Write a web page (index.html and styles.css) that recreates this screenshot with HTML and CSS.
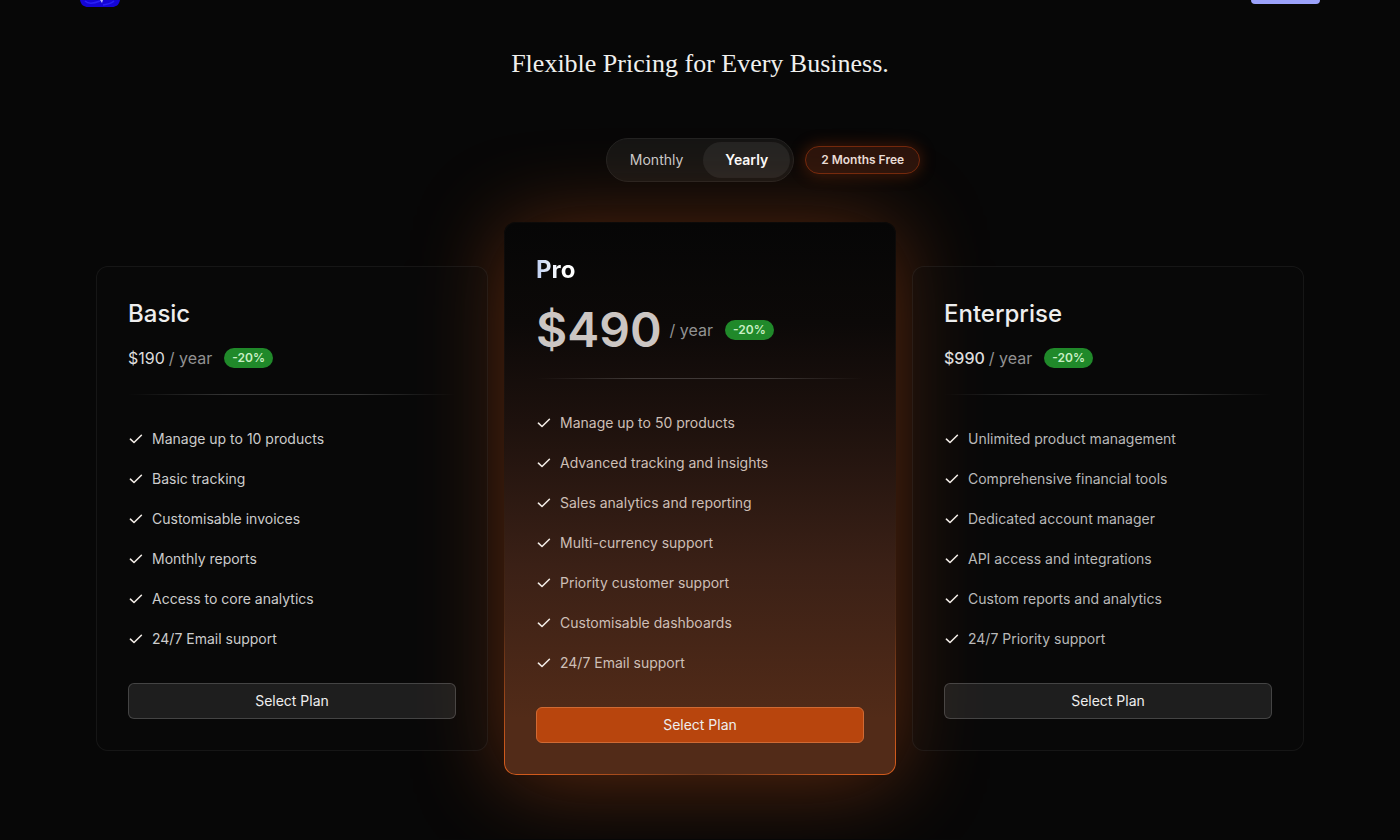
FILE: index.html
```html
<!DOCTYPE html>
<html lang="en">

<head>
  <meta charset="utf-8">
  <meta name="viewport" content="width=device-width, initial-scale=1.0">
  <title>Pricing</title>
  <link rel="stylesheet" href="styles.css">
</head>

<body>
  <svg class="defs" width="0" height="0">
    <symbol id="check" viewBox="0 0 16 16">
      <path d="M2.4 8.2 6 11.5l7.4-7.2" fill="none" stroke="currentColor" stroke-width="1.6" stroke-linecap="round" stroke-linejoin="round" />
    </symbol>
  </svg>

  <header class="header">
    <a class="logo" href="#" aria-label="Home">
      <svg width="40" height="8" viewBox="0 0 40 8">
        <path d="M0 0h40c-1 5-4 7-8 7H8C4 7 1 5 0 0z" fill="#1405d6" />
        <path d="M5 1c4 4 10 2 15 0M23 5c5-1 8-1 11-4" fill="none" stroke="#2a20f5" stroke-width="1.5" />
        <path d="M20 0l3 0-1 3z" fill="#b9b8ff" />
      </svg>
    </a>
    <a class="signup" href="#" aria-label="Sign up"></a>
  </header>

  <main>
    <h1>Flexible Pricing for Every Business.</h1>

    <div class="billing">
      <div class="toggle">
        <button type="button">Monthly</button>
        <button type="button" class="select">Yearly</button>
      </div>
      <span class="free">2 Months Free</span>
    </div>

    <div class="plans">
      <section class="card">
        <h2>Basic</h2>
        <p class="price"><b>$190</b> <span>/ year</span> <em>-20%</em></p>
        <hr>
        <ul>
          <li><svg><use href="#check" /></svg>Manage up to 10 products</li>
          <li><svg><use href="#check" /></svg>Basic tracking</li>
          <li><svg><use href="#check" /></svg>Customisable invoices</li>
          <li><svg><use href="#check" /></svg>Monthly reports</li>
          <li><svg><use href="#check" /></svg>Access to core analytics</li>
          <li><svg><use href="#check" /></svg>24/7 Email support</li>
        </ul>
        <button type="button" class="plan-btn">Select Plan</button>
      </section>

      <section class="card pro">
        <h2><span>Pro</span></h2>
        <p class="price"><b>$490</b> <span>/ year</span> <em>-20%</em></p>
        <hr>
        <ul>
          <li><svg><use href="#check" /></svg>Manage up to 50 products</li>
          <li><svg><use href="#check" /></svg>Advanced tracking and insights</li>
          <li><svg><use href="#check" /></svg>Sales analytics and reporting</li>
          <li><svg><use href="#check" /></svg>Multi-currency support</li>
          <li><svg><use href="#check" /></svg>Priority customer support</li>
          <li><svg><use href="#check" /></svg>Customisable dashboards</li>
          <li><svg><use href="#check" /></svg>24/7 Email support</li>
        </ul>
        <button type="button" class="plan-btn">Select Plan</button>
      </section>

      <section class="card enterprise">
        <h2>Enterprise</h2>
        <p class="price"><b>$990</b> <span>/ year</span> <em>-20%</em></p>
        <hr>
        <ul>
          <li><svg><use href="#check" /></svg>Unlimited product management</li>
          <li><svg><use href="#check" /></svg>Comprehensive financial tools</li>
          <li><svg><use href="#check" /></svg>Dedicated account manager</li>
          <li><svg><use href="#check" /></svg>API access and integrations</li>
          <li><svg><use href="#check" /></svg>Custom reports and analytics</li>
          <li><svg><use href="#check" /></svg>24/7 Priority support</li>
        </ul>
        <button type="button" class="plan-btn">Select Plan</button>
      </section>
    </div>
  </main>
</body>

</html>
```

FILE: styles.css
```css
* {
  box-sizing: border-box;
  margin: 0;
  padding: 0;
}

body {
  background: #070707;
  color: #eee;
  font-family: Inter, "Liberation Sans", sans-serif;
  font-size: 14px;
  line-height: 24px;
}

button {
  font: inherit;
  color: inherit;
  cursor: pointer;
}

.defs {
  position: absolute;
}

.header {
  display: flex;
  justify-content: space-between;
  align-items: flex-start;
  height: 8px;
  padding: 0 80px;
}

.logo svg {
  display: block;
}

.signup {
  width: 69px;
  height: 4px;
  background: #9ba2fb;
  border-radius: 0 0 6px 6px;
}

main {
  padding: 36px 96px 64px;
}

h1 {
  font-family: "Liberation Serif", serif;
  font-size: 26px;
  font-weight: normal;
  line-height: 40px;
  text-align: center;
  color: #f0f0ee;
}

.billing {
  display: grid;
  grid-template-columns: 1fr auto 1fr;
  align-items: center;
  column-gap: 11px;
  margin: 54px 0 40px;
}

.toggle {
  grid-column: 2;
  display: flex;
  padding: 3px;
  background: #151514;
  border: 1px solid #232322;
  border-radius: 22px;
}

.toggle button {
  height: 36px;
  padding: 0 20px;
  background: none;
  border: none;
  border-radius: 18px;
  color: #ccc;
}

.toggle .select {
  padding: 0 22px;
  background: #242423;
  color: #fff;
  font-weight: 600;
}

.free {
  justify-self: start;
  padding: 1px 15px;
  background: #2b140c;
  border: 1px solid #74290d;
  border-radius: 14px;
  box-shadow: 0 0 16px rgba(194, 65, 12, .35);
  color: #eadfd9;
  font-size: 12px;
  font-weight: 600;
}

.plans {
  display: grid;
  grid-template-columns: repeat(3, 1fr);
  align-items: start;
  gap: 16px;
}

.card {
  position: relative;
  z-index: 1;
  margin-top: 44px;
  padding: 31px;
  background: rgba(12, 12, 12, .3);
  border: 1px solid rgba(255, 255, 255, .06);
  border-radius: 12px;
}

.card.pro {
  z-index: 0;
  margin-top: 0;
  border-color: transparent;
  background:
    linear-gradient(#060606, #0c0908 18%, #1d110d 36%, #3a2016 62%, #522b18 90%) padding-box,
    radial-gradient(ellipse 150px 40px at 50% 100%, #70391c, transparent) border-box,
    linear-gradient(#0c0a09, #20140e 40%, #4a2816 72%, #d05a1c 96%) border-box;
  box-shadow: 0 6px 90px rgba(190, 80, 22, .48);
}

h2 {
  margin-bottom: 16px;
  font-size: 24px;
  font-weight: 500;
  line-height: 32px;
}

.pro h2 {
  font-weight: 700;
}

.pro h2 span {
  background: linear-gradient(90deg, #bccdf0, #fff 60%);
  -webkit-background-clip: text;
  background-clip: text;
  color: transparent;
}

.price {
  display: flex;
  align-items: center;
  gap: 4px;
  font-size: 16px;
}

.price b {
  font-weight: 400;
  color: #ddd;
}

.enterprise .price b {
  font-weight: 500;
}

.price span {
  color: #929292;
}

.price em {
  margin-left: 8px;
  padding: 0 8px;
  background: #20892a;
  border-radius: 10px;
  color: #c8efc4;
  font-size: 12px;
  font-style: normal;
  font-weight: 600;
  line-height: 20px;
}

.pro .price {
  gap: 8px;
}

.pro .price b {
  font-size: 48px;
  font-weight: 600;
  line-height: 56px;
  color: #ccc6c3;
}

.pro .price em {
  margin-left: 4px;
}

hr {
  height: 1px;
  margin: 24px 0 32px;
  border: none;
  background: linear-gradient(90deg, transparent, rgba(255, 255, 255, .18) 30%, rgba(255, 255, 255, .18) 70%, transparent);
}

.pro hr {
  margin-top: 20px;
}

ul {
  display: grid;
  gap: 16px;
  margin-bottom: 32px;
  list-style: none;
  color: #ccc;
}

.pro ul {
  color: #cdbfb6;
}

.enterprise ul {
  color: #b9b9b9;
}

li {
  display: flex;
  align-items: center;
  gap: 8px;
}

li svg {
  width: 16px;
  height: 16px;
  color: #f2ece6;
}

.plan-btn {
  display: block;
  width: 100%;
  height: 36px;
  background: rgba(255, 255, 255, .09);
  border: 1px solid rgba(255, 255, 255, .17);
  border-radius: 6px;
}

.pro .plan-btn {
  background: #b8450d;
  border-color: #d06a34;
}
```
